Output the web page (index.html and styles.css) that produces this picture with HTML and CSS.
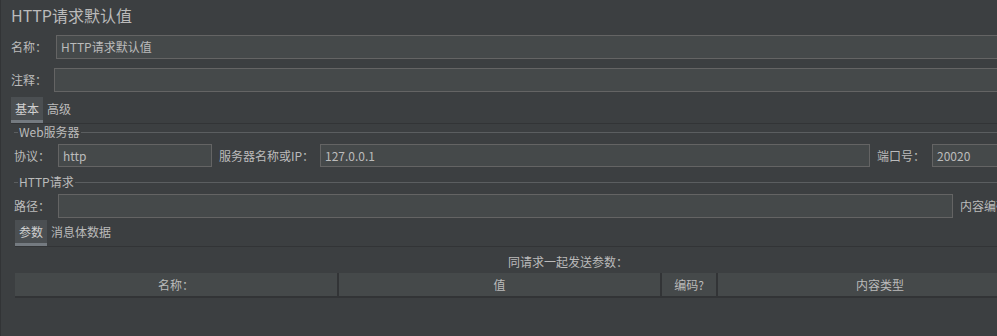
FILE: index.html
```html
<!DOCTYPE html>
<html lang="zh-CN">
  <head>
    <meta charset="UTF-8" />
    <title>HTTP请求默认值</title>
    <link rel="stylesheet" href="styles.css">
  </head>
  <body>
    <div class="page">
      <h2 class="title">HTTP请求默认值</h2>

      <div class="row row-name">
        <label class="label name-label">名称：</label>
        <div class="input grow">HTTP请求默认值</div>
      </div>

      <div class="row row-comment">
        <label class="label comment-label">注释：</label>
        <div class="input grow"></div>
      </div>

      <div class="tabs tabs-main">
        <span class="tab active">基本</span>
        <span class="tab">高级</span>
      </div>

      <div class="group">
        <div class="group-title">
          <span class="line short"></span>
          <span class="group-text">Web服务器</span>
          <span class="line"></span>
        </div>
        <div class="row row-server">
          <label class="label proto-label">协议：</label>
          <div class="input proto">http</div>
          <label class="label host-label">服务器名称或IP：</label>
          <div class="input host">127.0.0.1</div>
          <label class="label port-label">端口号：</label>
          <div class="input grow">20020</div>
        </div>
      </div>

      <div class="group group-http">
        <div class="group-title">
          <span class="line short"></span>
          <span class="group-text">HTTP请求</span>
          <span class="line"></span>
        </div>
        <div class="row row-path">
          <label class="label proto-label">路径：</label>
          <div class="input path"></div>
          <label class="label enc-label">内容编码：</label>
          <div class="input grow"></div>
        </div>
      </div>

      <div class="tabs tabs-params">
        <span class="tab active">参数</span>
        <span class="tab">消息体数据</span>
      </div>

      <p class="caption">同请求一起发送参数：</p>

      <div class="table-head">
        <div class="col col-name">名称：</div>
        <div class="col col-value">值</div>
        <div class="col col-enc">编码?</div>
        <div class="col col-type">内容类型</div>
      </div>
    </div>
  </body>
</html>
```

FILE: styles.css
```css
body {
  margin: 0;
  background-color: #3c3f41;
  overflow: hidden;
  font-family: "Noto Sans CJK SC", "Noto Sans", sans-serif;
  font-size: 12px;
  color: #bbbbbb;
}

.page {
  width: 1050px;
  height: 336px;
  border-left: 1px solid #323436;
  padding-left: 10px;
  box-sizing: border-box;
}

.title {
  margin: 0;
  padding-top: 4px;
  height: 31px;
  box-sizing: border-box;
  font-size: 16px;
  font-weight: normal;
  line-height: 22px;
  color: #bbbbbb;
}

.row {
  display: flex;
  align-items: center;
}

.label {
  white-space: nowrap;
  line-height: 16px;
}

.input {
  height: 24px;
  box-sizing: border-box;
  background-color: #45494a;
  border: 1px solid #646464;
  padding: 0 4px;
  line-height: 22px;
  white-space: nowrap;
}

.grow {
  flex: 1;
}

.row-name {
  margin-top: 4px;
}

.name-label {
  width: 45px;
}

.row-comment {
  margin-top: 9px;
}

.comment-label {
  width: 43px;
}

.tabs {
  display: flex;
  border-bottom: 1px solid #323436;
  height: 26px;
}

.tabs-main {
  margin-top: 5px;
}

.tab {
  padding: 0 4px;
  line-height: 24px;
  height: 26px;
  box-sizing: border-box;
}

.tab.active {
  background-color: #4b4f52;
  border-bottom: 3px solid #747a80;
  color: #d0d0d0;
}

.group {
  padding-left: 3px;
}

.group-title {
  display: flex;
  align-items: center;
  height: 16px;
}

.line {
  flex: 1;
  height: 1px;
  background-color: #5b5e60;
}

.line.short {
  flex: none;
  width: 4px;
}

.group-text {
  padding: 0 1px;
  line-height: 16px;
}

.row-server {
  margin-top: 4px;
}

.row-server .input {
  height: 23px;
  line-height: 21px;
}

.proto-label {
  width: 44px;
}

.proto {
  width: 154px;
}

.host-label {
  width: 101px;
  margin-left: 7px;
}

.host {
  width: 550px;
}

.port-label {
  width: 55px;
  margin-left: 7px;
}

.group-http .group-title {
  margin-top: 7px;
}

.row-path {
  margin-top: 4px;
}

.path {
  width: 895px;
}

.enc-label {
  margin-left: 7px;
  width: 60px;
}

.tabs-params {
  margin-left: 4px;
  margin-top: 2px;
}

.caption {
  margin: 0;
  height: 26px;
  padding-left: 497px;
  line-height: 30px;
}

.table-head {
  display: flex;
  margin-left: 4px;
  height: 25px;
  background-color: #45494a;
  border-bottom: 2px solid #323436;
  box-sizing: border-box;
}

.col {
  text-align: center;
  line-height: 24px;
  border-right: 2px solid #323436;
  box-sizing: border-box;
}

.col-name {
  width: 324px;
}

.col-value {
  width: 323px;
}

.col-enc {
  width: 56px;
}

.col-type {
  width: 324px;
  border-right: none;
}
```
